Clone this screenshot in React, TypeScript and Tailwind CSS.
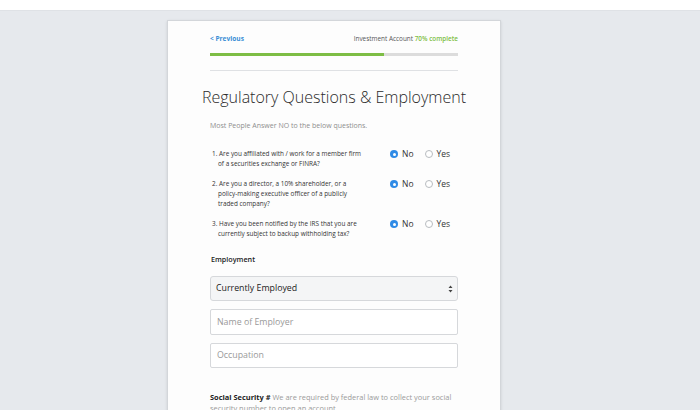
const questions = [
  ['1. Are you affiliated with / work for a member firm', 'of a securities exchange or FINRA?'],
  ['2. Are you a director, a 10% shareholder, or a', 'policy-making executive officer of a publicly', 'traded company?'],
  ['3. Have you been notified by the IRS that you are', 'currently subject to backup withholding tax?'],
];

function Radio({ checked, label }: { checked?: boolean; label: string }) {
  return (
    <span className="flex items-center gap-[4px]">
      {checked ? (
        <span className="w-[8px] h-[8px] rounded-full bg-[#2f8be6] flex items-center justify-center">
          <span className="w-[3px] h-[3px] rounded-full bg-white" />
        </span>
      ) : (
        <span className="w-[8px] h-[8px] rounded-full border border-[#b8bcc0] bg-white" />
      )}
      <span className="text-[8.5px] text-[#333]">{label}</span>
    </span>
  );
}

export default function App() {
  return (
    <div
      className="w-[700px] h-[420px] overflow-hidden bg-white flex flex-col"
      style={{ fontFamily: '"Open Sans", "Noto Sans", sans-serif' }}
    >
      <div className="h-[10px] shrink-0 bg-white" />
      <div className="h-[400px] shrink-0 bg-[#e6e9ed] border-t border-[#dfe2e6] overflow-hidden flex justify-center items-start pt-[9px]">
        <div className="w-[334px] ml-[-32px] bg-[#fdfdfd] border border-[#d3d6da] shadow-sm px-[42px] pt-[13px] pb-10 flex flex-col">
          <div className="flex justify-between items-center text-[6.4px]">
            <span className="text-[#3a8fd6] font-bold text-[6.6px]">&lt; Previous</span>
            <span className="text-[#555]">
              Investment Account <span className="text-[#7dbd45] font-semibold">70% complete</span>
            </span>
          </div>
          <div className="mt-[9px] h-[3px] shrink-0 bg-[#dcdcdc]">
            <div className="h-full w-[70%] bg-[#7dbd45]" />
          </div>
          <div className="mt-[14px] h-px shrink-0 bg-[#dfe1e4]" />
          <h1 className="mt-[14px] mx-[-10px] text-center text-[16px] font-light text-[#2a2a2a] leading-[24px] whitespace-nowrap">
            Regulatory Questions &amp; Employment
          </h1>
          <p className="mt-[12px] text-[7px] text-[#8e8e8e]">Most People Answer NO to the below questions.</p>
          <div className="mt-[18px] flex flex-col gap-[10px]">
            {questions.map((lines, i) => (
              <div key={i} className="flex">
                <div className="w-[180px] pl-[2px] text-[6.4px] leading-[10px] text-[#333]">
                  {lines.map((l, j) => (
                    <div key={j} className={j > 0 ? 'pl-[6px]' : ''}>{l}</div>
                  ))}
                </div>
                <div className="flex gap-[11px] h-[10px]">
                  <Radio checked label="No" />
                  <Radio label="Yes" />
                </div>
              </div>
            ))}
          </div>
          <div className="mt-[15px] text-[7.2px] font-semibold text-[#222] pl-px">Employment</div>
          <div className="mt-[11px] h-[25px] shrink-0 rounded-[3px] border border-[#d6d8db] bg-[#f4f5f6] flex items-center justify-between pl-[5px] pr-[4px]">
            <span className="text-[8.8px] text-[#222]">Currently Employed</span>
            <svg width="5" height="8" viewBox="0 0 5 8">
              <path d="M2.5 0.5 L4.5 3 L0.5 3 Z M2.5 7.5 L4.5 5 L0.5 5 Z" fill="#444" />
            </svg>
          </div>
          <div className="mt-[8px] h-[26px] shrink-0 rounded-[2px] border border-[#d6d8db] bg-white flex items-center pl-[6px]">
            <span className="text-[8.8px] text-[#9a9a9a]">Name of Employer</span>
          </div>
          <div className="mt-[8px] h-[25px] shrink-0 rounded-[2px] border border-[#d6d8db] bg-white flex items-center pl-[6px]">
            <span className="text-[8.8px] text-[#9a9a9a]">Occupation</span>
          </div>
          <p className="mt-[24px] text-[7.45px] leading-[11px] text-[#9a9a9a]">
            <span className="font-bold text-[#222]">Social Security #</span> We are required by federal law to collect your social
            security number to open an account.
          </p>
        </div>
      </div>
      <div className="h-[10px] shrink-0 bg-white" />
    </div>
  );
}
